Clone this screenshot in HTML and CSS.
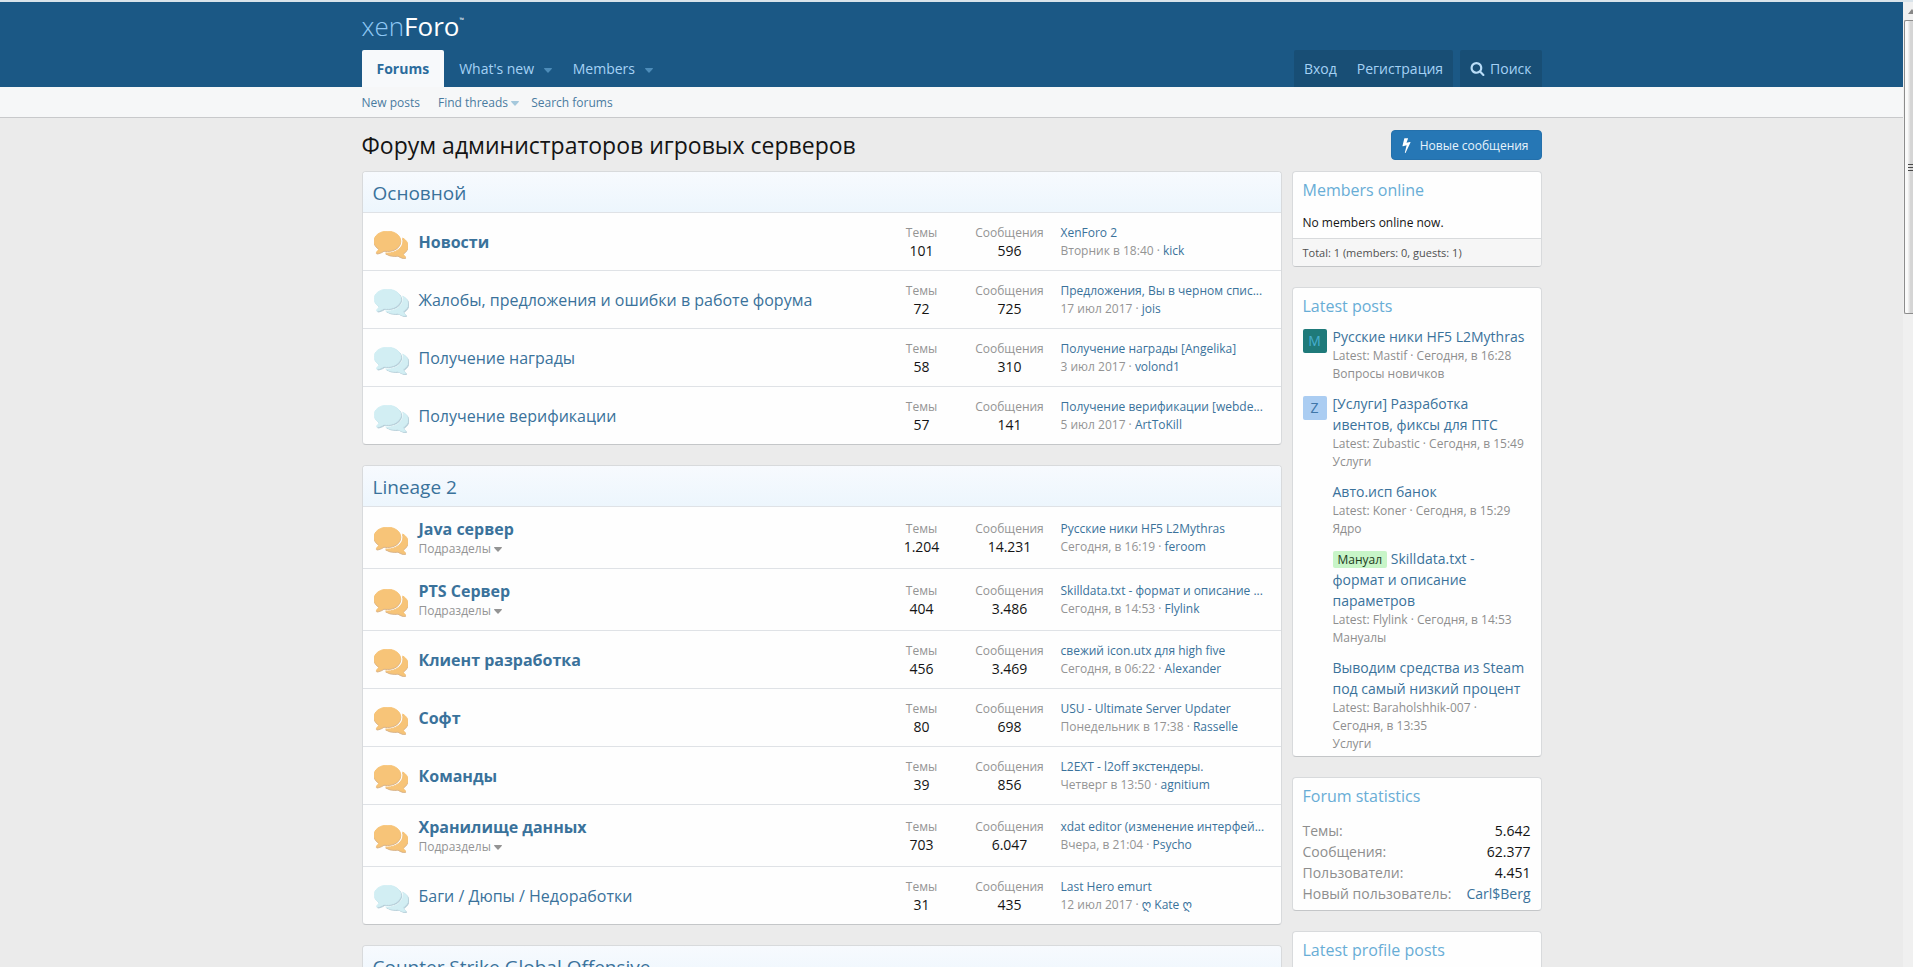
FILE: index.html
```html
<!DOCTYPE html>
<html lang="ru">
<head>
<meta charset="utf-8">
<title>Форум администраторов игровых серверов</title>
<link rel="stylesheet" href="styles.css">
</head>
<body>
<svg class="sprite" aria-hidden="true">
  <symbol id="comments" viewBox="0 256 1792 1408"><path d="M1408 768q0 139-94 257t-256.500 186.500-353.500 68.500q-86 0-176-16-124 88-278 128-36 9-86 16h-3q-11 0-20.500-8t-11.500-21q-1-3-1-6.500t.5-6.500 2-6l2.500-5 3.500-5.500 4-5 4.500-5 4-4.500q5-6 23-25t26-29.500 22.500-29 25-38.500 20.500-44q-124-72-195-177t-71-224q0-139 94-257t256.500-186.500 353.500-68.500 353.500 68.500 256.500 186.500 94 257zm384 256q0 120-71 224.500t-195 176.500q10 24 20.500 44t25 38.500 22.500 29 26 29.500 23 25q1 1 4 4.500t4.500 5 4 5 3.500 5.500l2.500 5 2 6 .5 6.500-1 6.500q-3 14-13 22t-22 7q-50-7-86-16-154-40-278-128-90 16-176 16-271 0-472-132 58 4 88 4 161 0 309-45t264-129q125-92 192-212t67-254q0-77-23-152 129 71 204 178t75 230z"/></symbol>
  <symbol id="search" viewBox="0 0 1792 1792"><path d="M1216 832q0-185-131.500-316.500t-316.500-131.500-316.500 131.500-131.500 316.500 131.500 316.500 316.500 131.500 316.500-131.500 131.500-316.500zm512 832q0 52-38 90t-90 38q-54 0-90-38l-343-342q-179 124-399 124-143 0-273.500-55.500t-225-150-150-225-55.500-273.500 55.500-273.500 150-225 225-150 273.500-55.500 273.500 55.500 225 150 150 225 55.500 273.500q0 220-124 399l343 343q37 37 37 90z"/></symbol>
  <symbol id="bolt" viewBox="448 0 896 1792"><path d="M1333 566q18 20 7 44l-540 1157q-13 25-42 25-4 0-14-2-17-5-25.500-19t-4.500-30l197-808-406 101q-4 1-12 1-18 0-31-11-18-15-13-39l201-825q4-14 16-23t28-9h328q19 0 32 12.500t13 29.500q0 8-5 18l-171 463 396-98q8-2 12-2 19 0 34 15z"/></symbol>
  <symbol id="caret" viewBox="0 0 8 5"><path d="M.5 0h7q.8.300.2 1L4.500 4.500q-.5.500-1 0L.3 1Q-.3.300.5 0z"/></symbol>
</svg>
<div class="window">
<div class="page">
  <header class="header">
    <div class="inner">
      <a class="logo" href="#"><span>xen</span>Foro<sup>™</sup></a>
      <div class="nav">
        <nav class="tabs">
          <a class="tab active" href="#">Forums</a>
          <a class="tab" href="#">What's new <svg class="caret"><use href="#caret"/></svg></a>
          <a class="tab" href="#">Members <svg class="caret"><use href="#caret"/></svg></a>
        </nav>
        <div class="account">
          <div class="group"><a href="#">Вход</a><a href="#">Регистрация</a></div>
          <div class="group"><a href="#"><svg class="icon-search"><use href="#search"/></svg>Поиск</a></div>
        </div>
      </div>
    </div>
  </header>
  <div class="subnav">
    <nav class="inner">
      <a href="#">New posts</a>
      <a class="has-caret" href="#">Find threads <svg class="caret"><use href="#caret"/></svg></a>
      <a href="#">Search forums</a>
    </nav>
  </div>
  <div class="inner">
    <div class="titlebar">
      <h1>Форум администраторов игровых серверов</h1>
      <button class="cta" type="button"><svg class="icon-bolt"><use href="#bolt"/></svg>Новые сообщения</button>
    </div>
    <div class="columns">
      <main class="stack">
        <section class="block">
          <h2><a href="#">Основной</a></h2>
          <div class="node unread"><svg class="bubble"><use href="#comments"/></svg><div class="name"><a href="#">Новости</a></div><dl><dt>Темы</dt><dd>101</dd></dl><dl><dt>Сообщения</dt><dd>596</dd></dl><div class="last"><a href="#">XenForo 2</a><p>Вторник в 18:40 · <a href="#">kick</a></p></div></div>
          <div class="node"><svg class="bubble"><use href="#comments"/></svg><div class="name"><a href="#">Жалобы, предложения и ошибки в работе форума</a></div><dl><dt>Темы</dt><dd>72</dd></dl><dl><dt>Сообщения</dt><dd>725</dd></dl><div class="last"><a href="#">Предложения, Вы в черном спис...</a><p>17 июл 2017 · <a href="#">jois</a></p></div></div>
          <div class="node"><svg class="bubble"><use href="#comments"/></svg><div class="name"><a href="#">Получение награды</a></div><dl><dt>Темы</dt><dd>58</dd></dl><dl><dt>Сообщения</dt><dd>310</dd></dl><div class="last"><a href="#">Получение награды [Angelika]</a><p>3 июл 2017 · <a href="#">volond1</a></p></div></div>
          <div class="node"><svg class="bubble"><use href="#comments"/></svg><div class="name"><a href="#">Получение верификации</a></div><dl><dt>Темы</dt><dd>57</dd></dl><dl><dt>Сообщения</dt><dd>141</dd></dl><div class="last"><a href="#">Получение верификации [webde...</a><p>5 июл 2017 · <a href="#">ArtToKill</a></p></div></div>
        </section>
        <section class="block">
          <h2><a href="#">Lineage 2</a></h2>
          <div class="node unread parent"><svg class="bubble"><use href="#comments"/></svg><div class="name"><a href="#">Java сервер</a><button class="sub" type="button">Подразделы <svg class="caret"><use href="#caret"/></svg></button></div><dl><dt>Темы</dt><dd>1.204</dd></dl><dl><dt>Сообщения</dt><dd>14.231</dd></dl><div class="last"><a href="#">Русские ники HF5 L2Mythras</a><p>Сегодня, в 16:19 · <a href="#">feroom</a></p></div></div>
          <div class="node unread parent"><svg class="bubble"><use href="#comments"/></svg><div class="name"><a href="#">PTS Сервер</a><button class="sub" type="button">Подразделы <svg class="caret"><use href="#caret"/></svg></button></div><dl><dt>Темы</dt><dd>404</dd></dl><dl><dt>Сообщения</dt><dd>3.486</dd></dl><div class="last"><a href="#">Skilldata.txt - формат и описание ...</a><p>Сегодня, в 14:53 · <a href="#">Flylink</a></p></div></div>
          <div class="node unread"><svg class="bubble"><use href="#comments"/></svg><div class="name"><a href="#">Клиент разработка</a></div><dl><dt>Темы</dt><dd>456</dd></dl><dl><dt>Сообщения</dt><dd>3.469</dd></dl><div class="last"><a href="#">свежий icon.utx для high five</a><p>Сегодня, в 06:22 · <a href="#">Alexander</a></p></div></div>
          <div class="node unread"><svg class="bubble"><use href="#comments"/></svg><div class="name"><a href="#">Софт</a></div><dl><dt>Темы</dt><dd>80</dd></dl><dl><dt>Сообщения</dt><dd>698</dd></dl><div class="last"><a href="#">USU - Ultimate Server Updater</a><p>Понедельник в 17:38 · <a href="#">Rasselle</a></p></div></div>
          <div class="node unread"><svg class="bubble"><use href="#comments"/></svg><div class="name"><a href="#">Команды</a></div><dl><dt>Темы</dt><dd>39</dd></dl><dl><dt>Сообщения</dt><dd>856</dd></dl><div class="last"><a href="#">L2EXT - l2off экстендеры.</a><p>Четверг в 13:50 · <a href="#">agnitium</a></p></div></div>
          <div class="node unread parent"><svg class="bubble"><use href="#comments"/></svg><div class="name"><a href="#">Хранилище данных</a><button class="sub" type="button">Подразделы <svg class="caret"><use href="#caret"/></svg></button></div><dl><dt>Темы</dt><dd>703</dd></dl><dl><dt>Сообщения</dt><dd>6.047</dd></dl><div class="last"><a href="#">xdat editor (изменение интерфей...</a><p>Вчера, в 21:04 · <a href="#">Psycho</a></p></div></div>
          <div class="node"><svg class="bubble"><use href="#comments"/></svg><div class="name"><a href="#">Баги / Дюпы / Недоработки</a></div><dl><dt>Темы</dt><dd>31</dd></dl><dl><dt>Сообщения</dt><dd>435</dd></dl><div class="last"><a href="#">Last Hero emurt</a><p>12 июл 2017 · <a href="#">ღ Kate ღ</a></p></div></div>
        </section>
        <section class="block">
          <h2><a href="#">Counter Strike Global Offensive</a></h2>
        </section>
      </main>
      <aside class="stack">
        <section class="block">
          <h3><a href="#">Members online</a></h3>
          <p class="online">No members online now.</p>
          <p class="total">Total: 1 (members: 0, guests: 1)</p>
        </section>
        <section class="block">
          <h3><a href="#">Latest posts</a></h3>
          <ul class="posts">
            <li><span class="avatar teal">M</span><div><a href="#">Русские ники HF5 L2Mythras</a><p>Latest: Mastif · Сегодня, в 16:28</p><p>Вопросы новичков</p></div></li>
            <li><span class="avatar blue">Z</span><div><a href="#">[Услуги] Разработка ивентов, фиксы для ПТС</a><p>Latest: Zubastic · Сегодня, в 15:49</p><p>Услуги</p></div></li>
            <li><span class="avatar"></span><div><a href="#">Авто.исп банок</a><p>Latest: Koner · Сегодня, в 15:29</p><p>Ядро</p></div></li>
            <li><span class="avatar"></span><div><a href="#"><span class="label">Мануал</span> Skilldata.txt - формат и описание параметров</a><p>Latest: Flylink · Сегодня, в 14:53</p><p>Мануалы</p></div></li>
            <li><span class="avatar"></span><div><a href="#">Выводим средства из Steam под самый низкий процент</a><p>Latest: Baraholshhik-007 · Сегодня, в 13:35</p><p>Услуги</p></div></li>
          </ul>
        </section>
        <section class="block">
          <h3><a href="#">Forum statistics</a></h3>
          <dl class="stats">
            <div><dt>Темы:</dt><dd>5.642</dd></div>
            <div><dt>Сообщения:</dt><dd>62.377</dd></div>
            <div><dt>Пользователи:</dt><dd>4.451</dd></div>
            <div><dt>Новый пользователь:</dt><dd><a href="#">Carl$Berg</a></dd></div>
          </dl>
        </section>
        <section class="block">
          <h3><a href="#">Latest profile posts</a></h3>
        </section>
      </aside>
    </div>
  </div>
</div>
<div class="scrollbar" aria-hidden="true">
  <svg class="arrow" viewBox="0 0 8 5"><path d="M0 5 4 0l4 5z"/></svg>
  <div class="thumb"><i></i><i></i><i></i></div>
</div>
</div>
</body>
</html>
```

FILE: styles.css
```css
* { box-sizing: border-box; }
body, h1, h2, h3, p, dl, dd, ul { margin: 0; padding: 0; }
body {
  background: #ebebeb;
  color: #141414;
  font-family: "Open Sans", "DejaVu Sans", sans-serif;
  font-size: 14px;
  line-height: 21px;
}
a { color: #3a729b; text-decoration: none; }
ul { list-style: none; }
button { font-family: inherit; border: 0; cursor: pointer; }
.sprite { display: none; }

.window {
  display: flex;
  height: 100vh;
  overflow: hidden;
  border-top: 2px solid #d9e3ea;
}
.page { flex: 1; min-width: 0; }
.inner { max-width: 1180px; margin: 0 auto; }
.caret { width: 8px; height: 5px; fill: currentColor; vertical-align: middle; }

.header { background: #1b5885; }
.logo {
  display: flex;
  height: 48px;
  align-items: center;
  color: #fff;
  font-size: 26px;
  font-weight: 400;
}
.logo span { color: #8fc8f5; font-weight: 300; }
.logo sup { font-size: 6px; line-height: 6px; margin-bottom: 12px; }
.nav { display: flex; justify-content: space-between; height: 37px; }
.tabs, .account { display: flex; }
.tab {
  padding: 8px 15px 0;
  color: #a5d2f5;
}
.tab + .tab { padding-right: 6px; }
.tab .caret { margin-left: 6px; color: #4d8cb9; }
.tab.active { background: #f7f9fb; color: #2b6c9d; font-weight: 700; border-radius: 2px 2px 0 0; }
.account { gap: 7px; }
.group { display: flex; background: #184e75; border-radius: 2px 2px 0 0; }
.group a { padding: 8px 10px 0; color: #a5d2f5; white-space: nowrap; }
.icon-search { width: 15px; height: 15px; fill: #b9ddf8; vertical-align: -2px; margin-right: 5px; }

.subnav { background: #f6f7f8; border-bottom: 1px solid #c8c9cb; font-size: 12px; }
.subnav .inner { display: flex; gap: 18px; height: 30px; align-items: center; }
.subnav a { color: #4a7ba0; }
.subnav .has-caret { margin-right: -6px; }
.subnav .caret { color: #a5c8dc; }

.titlebar { display: flex; justify-content: space-between; align-items: center; padding: 12px 0 11px; }
h1 { font-size: 23px; line-height: 30px; font-weight: 400; }
.cta {
  display: flex;
  align-items: center;
  height: 30px;
  padding: 0 12px 0 10px;
  background: #2677b5;
  border: 1px solid #2470ab;
  border-radius: 4px;
  color: #e8f4fc;
  font-size: 12px;
}
.icon-bolt { width: 9px; height: 16px; margin-right: 9px; fill: #fff; }

.columns { display: grid; grid-template-columns: minmax(0, 1fr) 250px; gap: 10px; align-items: start; }
.stack { display: grid; gap: 20px; }
.block {
  background: #fefefe;
  border: 1px solid #d8dadc;
  border-bottom-color: #c4c6c8;
  border-radius: 4px;
  overflow: hidden;
}
h2 {
  padding: 7px 10px 5px;
  background: linear-gradient(#f7fafe, #edf6fd);
  font-size: 19px;
  line-height: 28px;
  font-weight: 400;
}
.node {
  display: grid;
  grid-template-columns: 46px minmax(0, 1fr) 88px 88px 227px;
  align-items: center;
  min-height: 58px;
  padding: 10px 0;
  border-top: 1px solid #dfe2e6;
}
.node.parent { min-height: 62px; }
.bubble { width: 34px; height: 27px; margin-left: 11px; margin-top: 6px; fill: #d2eef3; stroke: #d2eef3; stroke-width: 50px; filter: drop-shadow(1px 1px 0 #b6cfd9); }
.unread .bubble { fill: #f7c478; stroke: #f7c478; filter: drop-shadow(0 1px 0 #d9b387); }
.name { padding-left: 10px; font-size: 16px; line-height: 22px; }
.unread .name > a { font-weight: 700; }
.sub {
  display: block;
  padding: 0;
  background: none;
  color: #949494;
  font-size: 12px;
  line-height: 18px;
}
.node dl { text-align: center; line-height: 18px; }
.node dt { color: #949494; font-size: 12px; }
.node dd { font-size: 14px; }
.last { padding: 0 10px 0 7px; font-size: 12px; line-height: 18px; white-space: nowrap; }
.last p { color: #949494; }

h3 { padding: 6px 10px 7px; font-size: 16px; line-height: 24px; font-weight: 400; }
h3 a { color: #68add6; }
.online { padding: 3px 10px 5px; font-size: 12px; }
.total {
  padding: 4px 10px;
  background: #f6f6f6;
  border-top: 1px solid #d8dadc;
  color: #505050;
  font-size: 11px;
  line-height: 19px;
}
.posts { display: grid; gap: 10px; padding: 1px 14px 3px 10px; }
.posts li { display: flex; gap: 6px; }
.posts div { flex: 1; min-width: 0; }
.posts p { color: #8e8e8e; font-size: 12px; line-height: 18px; }
.avatar { flex: none; width: 24px; height: 24px; margin-top: 3px; border-radius: 2px; text-align: center; line-height: 24px; }
.teal { background: #1f7a7a; color: #47aed0; }
.blue { background: #abcdf2; color: #3f76a8; }
.label { padding: 0 5px; background: #c8f5c8; border-radius: 2px; color: #1c3a1c; font-size: 12px; line-height: 16px; }
.stats { padding: 5px 10px 6px; }
.stats div { display: flex; justify-content: space-between; }
.stats dt { color: #8e8e8e; }

.scrollbar { width: 10px; padding-left: 1px; background: #f0f0f0; overflow: hidden; }
.arrow { display: block; width: 8px; height: 5px; margin: 7px 0 6px 4px; fill: #868686; }
.thumb {
  display: grid;
  align-content: center;
  justify-items: end;
  gap: 2px;
  height: 294px;
  border: 1px solid #8c8c8c;
  border-right: 0;
  border-radius: 2px 0 0 2px;
  background: linear-gradient(90deg, #fafafa 30%, #d5d5d5 70%);
}
.thumb i { width: 5px; height: 1px; background: #4a4a4a; }
```
